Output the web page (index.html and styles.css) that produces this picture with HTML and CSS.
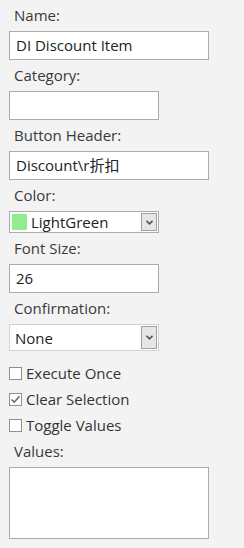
FILE: index.html
```html
<!DOCTYPE html>
<html lang="en">
<head>
    <meta charset="UTF-8">
    <meta name="viewport" content="width=device-width, initial-scale=1.0">
    <title>Button Properties</title>
    <link rel="stylesheet" href="styles.css">
</head>
<body>
    <div class="panel">
        <div class="label">Name:</div>
        <div class="textbox wide">DI Discount Item</div>

        <div class="label">Category:</div>
        <div class="textbox narrow"></div>

        <div class="label">Button Header:</div>
        <div class="textbox wide">Discount\r折扣</div>

        <div class="label">Color:</div>
        <div class="combo color-combo">
            <span class="swatch"></span>
            <span class="combo-text">LightGreen</span>
            <span class="drop-btn">
                <svg width="7" height="5" viewBox="0 0 7 5"><path d="M0.5 0.8 L3.5 3.8 L6.5 0.8" fill="none" stroke="#555" stroke-width="1.6"/></svg>
            </span>
        </div>

        <div class="label">Font Size:</div>
        <div class="textbox narrow">26</div>

        <div class="label">Confirmation:</div>
        <div class="combo confirm-combo">
            <span class="combo-text">None</span>
            <span class="drop-btn">
                <svg width="7" height="5" viewBox="0 0 7 5"><path d="M0.5 0.8 L3.5 3.8 L6.5 0.8" fill="none" stroke="#555" stroke-width="1.6"/></svg>
            </span>
        </div>

        <div class="checks">
            <div class="check-row"><span class="box"></span>Execute Once</div>
            <div class="check-row"><span class="box">
                <svg width="11" height="11" viewBox="0 0 11 11"><path d="M1.5 5.5 L4.2 8.2 L9.5 2.2" fill="none" stroke="#666" stroke-width="1.6"/></svg>
            </span>Clear Selection</div>
            <div class="check-row"><span class="box"></span>Toggle Values</div>
        </div>

        <div class="label values-label">Values:</div>
        <div class="textbox wide values"></div>
    </div>
</body>
</html>
```

FILE: styles.css
```css
body {
    margin: 0;
    background: #f3f3f3;
    font-family: "Open Sans", "Noto Sans CJK SC", sans-serif;
    font-size: 15px;
    color: #3a3a3a;
}
.panel {
    padding: 0 9px;
    display: flex;
    flex-direction: column;
    align-items: flex-start;
}
.label {
    height: 20px;
    line-height: 20px;
    padding: 5px 0 6px 5px;
}
.textbox {
    box-sizing: border-box;
    height: 29px;
    line-height: 27px;
    padding: 0 6px;
    background: white;
    border: 1px solid #ababab;
    color: #222;
    white-space: nowrap;
}
.wide {
    width: 200px;
}
.narrow {
    width: 150px;
}
.combo {
    box-sizing: border-box;
    width: 150px;
    background: white;
    display: flex;
    align-items: center;
    color: #222;
}
.color-combo {
    height: 22px;
    border: 1px solid #ababab;
    padding: 0 1px 0 2px;
}
.confirm-combo {
    height: 27px;
    border: 1px solid #d2d2d2;
    padding: 0 1px 0 5px;
}
.swatch {
    width: 15px;
    height: 16px;
    background: #90ee90;
    margin-right: 4px;
}
.combo-text {
    flex: 1;
}
.drop-btn {
    box-sizing: border-box;
    width: 16px;
    align-self: stretch;
    margin: 1px 0;
    border: 1px solid #a0a0a0;
    background: #e6e6e6;
    display: flex;
    align-items: center;
    justify-content: center;
}
.checks {
    display: flex;
    flex-direction: column;
    gap: 6px;
    margin-top: 12px;
}
.check-row {
    height: 20px;
    display: flex;
    align-items: center;
    color: #333;
}
.box {
    box-sizing: border-box;
    width: 13px;
    height: 13px;
    border: 1px solid #8f8f8f;
    background: white;
    margin-right: 4px;
    display: flex;
    align-items: center;
    justify-content: center;
}
.values-label {
    padding-top: 6px;
}
.values {
    height: 72px;
}
```
